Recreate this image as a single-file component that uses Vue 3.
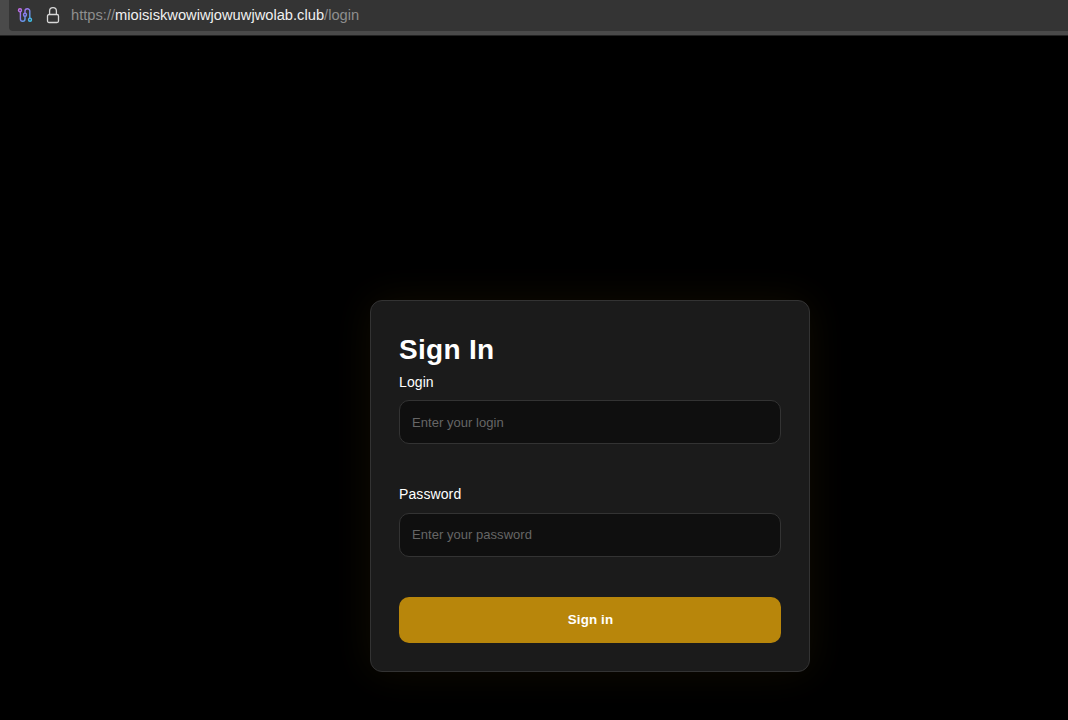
<template>
  <div class="browser">
    <header class="toolbar">
      <div class="urlbar">
        <svg class="urlbar__route" width="16" height="16" viewBox="0 0 16 16" fill="none">
          <defs>
            <linearGradient id="route" x1="2" y1="2" x2="14" y2="14" gradientUnits="userSpaceOnUse">
              <stop offset="0" stop-color="#c66be6" />
              <stop offset="0.5" stop-color="#8080ee" />
              <stop offset="1" stop-color="#3cc4e8" />
            </linearGradient>
          </defs>
          <g stroke="url(#route)" stroke-width="1.4" stroke-linecap="round">
            <circle cx="3" cy="3.2" r="1.5" />
            <circle cx="8" cy="7.8" r="1.5" />
            <circle cx="13" cy="12.8" r="1.5" />
            <path d="M3.4 4.8v7.2a2.3 2.3 0 0 0 4.6 0V9.4" />
            <path d="M8 6.2V4.1a2.4 2.4 0 0 1 4.8 0v7.1" />
          </g>
        </svg>
        <svg class="urlbar__lock" width="14" height="18" viewBox="0 0 14 18" fill="none" stroke="#d8d8d8" stroke-width="1.3">
          <rect x="1.5" y="8.5" width="11" height="8" rx="1.5" />
          <path d="M3.6 8.5V5a3.4 3.4 0 0 1 6.8 0v3.5" />
        </svg>
        <div class="urlbar__text">https://<span class="urlbar__host">{{ host }}</span>/login</div>
      </div>
    </header>

    <main class="page">
      <form class="card" @submit.prevent>
        <h1 class="card__title">Sign In</h1>
        <div v-for="field in fields" :key="field.id" class="field">
          <label :for="field.id">{{ field.label }}</label>
          <input
            :id="field.id"
            v-model="form[field.id]"
            :type="field.type"
            :placeholder="field.placeholder"
          />
        </div>
        <button type="submit" class="card__submit">Sign in</button>
      </form>
    </main>
  </div>
</template>

<script setup>
import { reactive } from "vue";

const host = "mioisiskwowiwjowuwjwolab.club";

const fields = [
  { id: "login", label: "Login", type: "text", placeholder: "Enter your login" },
  { id: "password", label: "Password", type: "password", placeholder: "Enter your password" }
];

const form = reactive({ login: "", password: "" });
</script>

<style>
body {
  background: #000;
}
</style>

<style scoped>
.browser {
  height: 720px;
  display: flex;
  flex-direction: column;
  overflow: hidden;
  background: #000;
  font-family: "Liberation Sans", Arial, sans-serif;
}

.toolbar {
  height: 36px;
  box-sizing: border-box;
  flex: none;
  padding-left: 9px;
  background: #4a4a4a;
  border-bottom: 1px solid #222;
}

.urlbar {
  height: 31px;
  display: flex;
  align-items: center;
  box-sizing: border-box;
  padding: 0 0 1px 8px;
  background: #343434;
  border-radius: 0 0 0 4px;
}

.urlbar__lock {
  margin-left: 13px;
}

.urlbar__text {
  margin-left: 11px;
  font-size: 14.7px;
  line-height: 30px;
  color: #8e8e8e;
  white-space: nowrap;
}

.urlbar__host {
  color: #f0f0f0;
}

.page {
  flex: 1;
  padding: 264px 0 0 370px;
}

.card {
  width: 440px;
  height: 372px;
  box-sizing: border-box;
  padding: 33px 28px 28px;
  background: #1b1b1b;
  border: 1px solid #333;
  border-radius: 12px;
  box-shadow: 0 0 40px rgba(184, 134, 11, 0.09);
  color: #fff;
}

.card__title {
  margin: 0 0 8.2px;
  font-size: 28px;
  line-height: 32px;
  letter-spacing: 0.3px;
}

.field {
  margin-bottom: 42px;
}

.field:last-of-type {
  margin-bottom: 40.4px;
}

.field label {
  display: block;
  margin-bottom: 9.2px;
  font-size: 14px;
  line-height: 17px;
  letter-spacing: 0.1px;
}

.field input {
  display: block;
  width: 100%;
  height: 44px;
  box-sizing: border-box;
  padding: 0 12px;
  background: #0f0f0f;
  border: 1px solid #333;
  border-radius: 10px;
  color: #fff;
  font-family: inherit;
  font-size: 13px;
  letter-spacing: 0.04px;
  outline: none;
}

.field input::placeholder {
  color: #666;
}

.card__submit {
  display: block;
  width: 100%;
  height: 46px;
  padding: 0 0 1px 1px;
  border: none;
  border-radius: 10px;
  background: #b8860b;
  color: #fff;
  font-family: inherit;
  font-size: 13.33px;
  font-weight: 700;
  letter-spacing: 0.15px;
  cursor: pointer;
}
</style>
